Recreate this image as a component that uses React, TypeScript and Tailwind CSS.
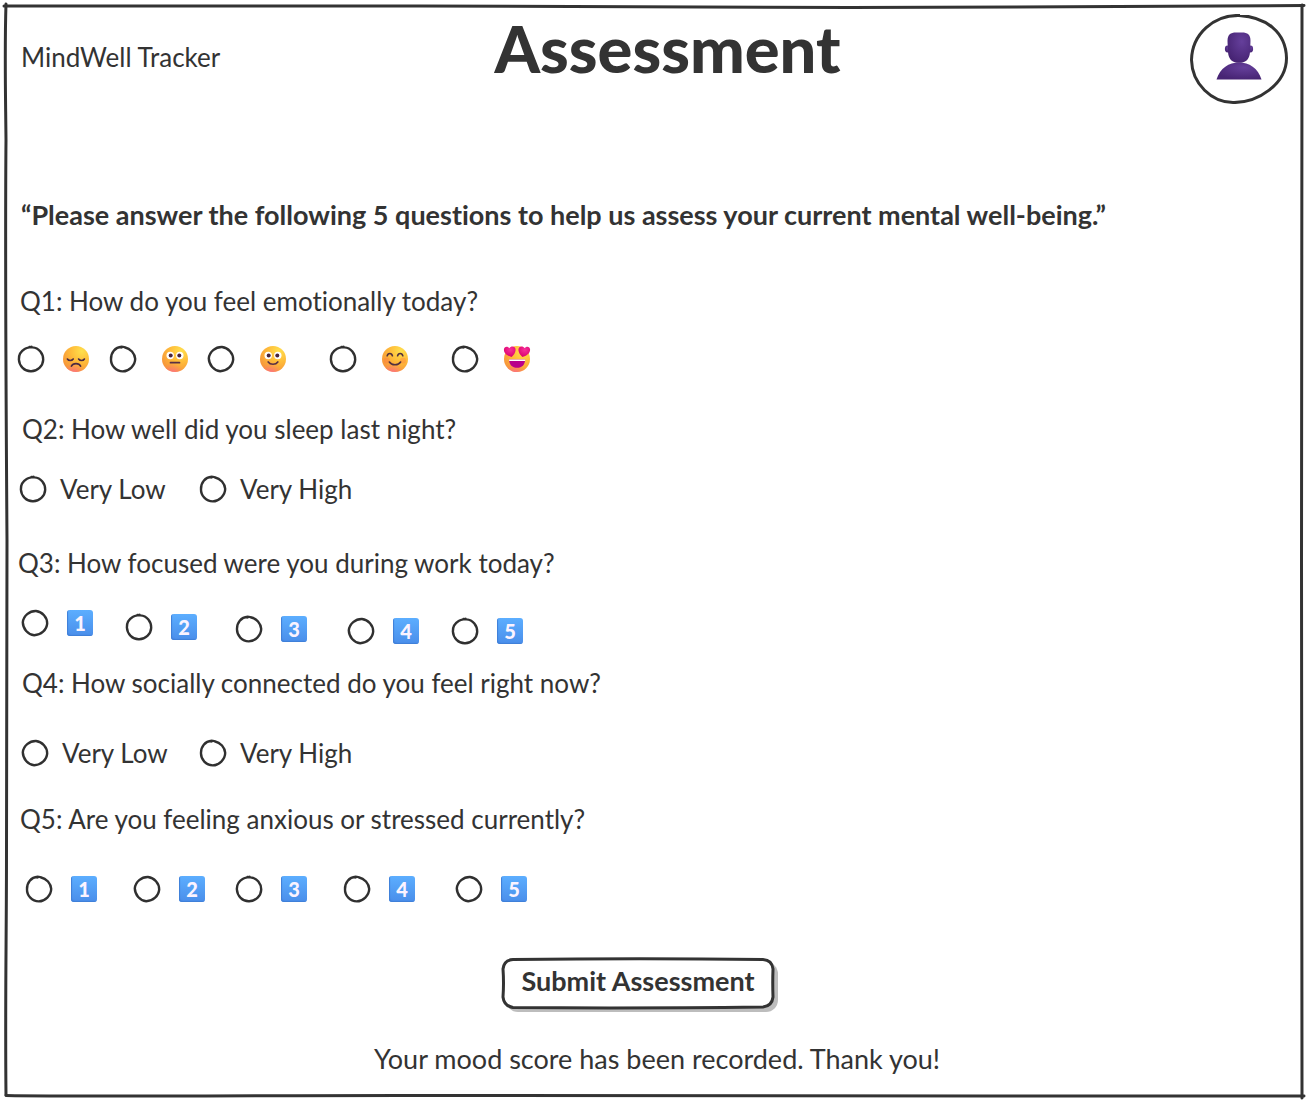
import type { ReactNode } from "react";

const ringShapes = [
  "M14.6 1.800 C13 2.600 10.500 2.200 8 3.800 C3.500 6.500 1.600 10 1.900 14.500 C2.200 21 7.500 26.300 13.800 26.200 C20.500 26.400 26 21 26.200 14.800 C26.400 9 22 2.800 15.500 2.400 L12.500 2",
  "M12.800 1.800 C6 2.400 1.800 7.400 2 14.200 C1.800 20.600 7 26.200 13.800 26.400 C20 26.200 26.200 20.500 26.200 13.800 C25.800 8.600 21.600 3.400 15.600 2.200 C14.400 1.600 13.400 1.800 12.200 2.400",
  "M15 2 C8.600 1.800 2.400 6.800 1.800 13.400 C2 19.800 6.800 25.600 13.200 26.200 C20 26.200 25.800 20.800 26.200 14.400 C26.200 8.400 21.400 2.600 15 2",
];

function Ring({ shape }: { shape: number }) {
  return (
    <svg viewBox="0 0 28 28" className="pointer-events-none absolute inset-0 size-7" fill="none" stroke="#303030" strokeWidth="2.4" strokeLinecap="round" strokeLinejoin="round" aria-hidden="true">
      <path d={ringShapes[shape % ringShapes.length]} />
    </svg>
  );
}

function Option({ name, value, shape, className, gap, children }: { name: string; value: string; shape: number; className: string; gap: string; children: ReactNode }) {
  return (
    <label className={`flex h-7 shrink-0 items-center whitespace-nowrap ${gap} ${className}`}>
      <span className="relative grid size-7 shrink-0 place-items-center">
        <input type="radio" name={name} value={value} aria-label={value} className="size-4 appearance-none rounded-full checked:bg-[#303030]" />
        <Ring shape={shape} />
      </span>
      {children}
    </label>
  );
}

function EmojiDefs() {
  return (
    <svg className="absolute size-0" aria-hidden="true">
      <defs>
        <radialGradient id="face" cx="0.72" cy="0.2" r="0.9">
          <stop offset="0" stopColor="#ffe04d" />
          <stop offset="0.45" stopColor="#ffbd3a" />
          <stop offset="1" stopColor="#f5903a" />
        </radialGradient>
        <radialGradient id="chin" cx="0.4" cy="1.1" r="0.45">
          <stop offset="0" stopColor="#ff5fa8" stopOpacity="0.9" />
          <stop offset="1" stopColor="#ff7a70" stopOpacity="0" />
        </radialGradient>
        <radialGradient id="heart" cx="0.55" cy="0.3" r="0.7">
          <stop offset="0" stopColor="#f8309a" />
          <stop offset="1" stopColor="#d9006c" />
        </radialGradient>
        <radialGradient id="person" cx="0.62" cy="0.3" r="0.7">
          <stop offset="0" stopColor="#653f9b" />
          <stop offset="1" stopColor="#472474" />
        </radialGradient>
      </defs>
    </svg>
  );
}

type Mood = "sad" | "neutral" | "slight" | "happy" | "love";

const eyeGlyph = (
  <>
    <circle cx="9.2" cy="10.5" r="3.7" fill="#fff" />
    <circle cx="18.8" cy="10.5" r="3.7" fill="#fff" />
    <circle cx="9.7" cy="10.5" r="2" fill="#47243d" />
    <circle cx="18.3" cy="10.5" r="2" fill="#47243d" />
  </>
);

const features: Record<Mood, ReactNode> = {
  sad: (
    <g fill="none" stroke="#4b2942" strokeWidth="1.6" strokeLinecap="round">
      <path d="M5.400 14c1.200 2 4.400 2 5.800 0M16.600 14c1.400 2 4.600 2 5.800 0M9.400 21.200c1.600-3.400 7.600-3.400 9.200 0" />
    </g>
  ),
  neutral: (
    <>
      {eyeGlyph}
      <path d="M9.500 17.700h9" stroke="#5a3045" strokeWidth="1.7" strokeLinecap="round" />
    </>
  ),
  slight: (
    <>
      {eyeGlyph}
      <path d="M9.200 17c2 3 7.600 3 9.600 0" fill="none" stroke="#5a3045" strokeWidth="1.7" strokeLinecap="round" />
    </>
  ),
  happy: (
    <>
      <circle cx="5.8" cy="15.4" r="3" fill="#ff6a45" opacity="0.3" />
      <circle cx="22" cy="15.4" r="3" fill="#ff6a45" opacity="0.3" />
      <path d="M6.200 10.800c.6-3 4.600-3 5.200 0M16.600 10.800c.6-3 4.600-3 5.200 0M8.400 17c2.200 3.600 9 3.600 11.200 0" fill="none" stroke="#51303f" strokeWidth="1.6" strokeLinecap="round" />
    </>
  ),
  love: (
    <>
      <path d="M6 14.400h16.200c-.3 5.200-3.200 8.400-8.100 8.400S6.300 19.600 6 14.400Z" fill="#b8008b" />
      <path d="M6 14.400h16.200v1.700H6.200Z" fill="#fff" />
      <path d="M8.600 12C4.600 10.900.9 8.600.9 4.800.9 1.400 4.700.6 6.300 3.200 8.200.5 12.700 1.300 12.600 5c-.2 3-2 5.200-4 7Z" fill="url(#heart)" />
      <path d="M19.400 12c4-1.100 7.700-3.400 7.700-7.200 0-3.400-3.800-4.200-5.400-1.600-1.900-2.700-6.400-1.900-6.300 1.800.2 3 2 5.200 4 7Z" fill="url(#heart)" />
    </>
  ),
};

function Emoji({ mood }: { mood: Mood }) {
  return (
    <svg viewBox="0 0 28 28" className="size-7 shrink-0" aria-hidden="true">
      <circle cx="14" cy="14" r="13" fill="url(#face)" />
      <circle cx="14" cy="14" r="13" fill="url(#chin)" />
      {features[mood]}
    </svg>
  );
}

function DigitTile({ digit }: { digit: number }) {
  return (
    <span className="grid size-[26px] shrink-0 place-items-center rounded-[3px] bg-linear-to-b from-[#5caeff] to-[#4a8eea] text-xl leading-none font-black text-[#fbf3ff] shadow-[inset_1px_-1px_1px_#3f7fd8]">
      {digit}
    </span>
  );
}

function Question({ title, className, rowClass, children }: { title: string; className: string; rowClass: string; children: ReactNode }) {
  return (
    <fieldset className={className}>
      <legend className="text-[26px] leading-8">{title}</legend>
      <div className={`flex items-start text-[26px] leading-7 ${rowClass}`}>{children}</div>
    </fieldset>
  );
}

const moods: { mood: Mood; label: string; gap: string; width: string }[] = [
  { mood: "sad", label: "Very sad", gap: "gap-[17px]", width: "w-[92px]" },
  { mood: "neutral", label: "Neutral", gap: "gap-6", width: "w-[98px]" },
  { mood: "slight", label: "Fine", gap: "gap-6", width: "w-[122px]" },
  { mood: "happy", label: "Happy", gap: "gap-6", width: "w-[122px]" },
  { mood: "love", label: "Great", gap: "gap-6", width: "w-20" },
];

const focusCells = ["w-[104px]", "w-[110px] mt-1", "w-[112px] mt-1.5", "w-[104px] mt-2", "w-20 mt-2"];
const stressCells = ["w-[108px]", "w-[102px]", "w-[108px]", "w-[112px]", "w-20"];

function Frame() {
  return (
    <svg viewBox="0 0 1308 1102" preserveAspectRatio="none" className="pointer-events-none absolute inset-0 size-full" fill="none" stroke="#333" strokeWidth="3" strokeLinecap="round" aria-hidden="true">
      <path vectorEffect="non-scaling-stroke" d="M4 6 H420 C560 6 700 7.500 850 7.500 S1200 5.500 1304 5.500" />
      <path vectorEffect="non-scaling-stroke" d="M6 4 C4.500 50 5.500 90 6 140 C5 250 6 400 7 540 C7.500 660 6.500 760 6.500 850 S5 1000 6 1095" />
      <path vectorEffect="non-scaling-stroke" d="M1302 5 C1302 200 1301 400 1301.500 560 S1303 900 1302 1098" />
      <path vectorEffect="non-scaling-stroke" d="M6 1095.500 C90 1097 200 1095.500 400 1095.500 S1000 1096.500 1304 1096" />
    </svg>
  );
}

export default function App() {
  return (
    <div className="relative bg-white pr-5 pb-[27px] font-[Lato,sans-serif] text-[#333] [font-variant-ligatures:none]">
      <EmojiDefs />
      <Frame />
      <header className="grid grid-cols-[1fr_auto_1fr] items-center pt-3.5 pl-[21px]">
        <p className="pb-1 text-[26px] leading-8">MindWell Tracker</p>
        <h1 className="pb-[22px] pl-[26px] text-[65px] leading-[68px] font-black">Assessment</h1>
        <button type="button" aria-label="Profile" className="justify-self-end">
          <svg viewBox="0 0 98 90" className="h-[90px] w-[98px]" aria-hidden="true">
            <path d="M50 1.500 C24 .5 2 20 1.500 46 C2 70 22 88.500 43 88.500 C68 89 96.500 70 96.500 44 C96 18 76 3 49 1.500" fill="none" stroke="#333" strokeWidth="3" />
            <g fill="url(#person)">
              <ellipse cx="37.500" cy="35" rx="2.600" ry="3.400" />
              <ellipse cx="60.500" cy="35" rx="2.600" ry="3.400" />
              <path d="M26.500 65.500 C30 54 39 48.500 49 48.500 S68 54 71.500 65.500Z" />
              <path d="M37.500 27 C37.500 20.500 40.500 18.500 46 18.500 H52 C57.500 18.500 60.500 20.500 60.500 27 L60 38 C59.500 46 55 48.800 49 48.800 S38.500 46 38 38Z" />
            </g>
          </svg>
        </button>
      </header>

      <main>
        <p className="mt-[95px] pl-[21px] text-[27px] leading-8 font-bold">
          “Please answer the following 5 questions to help us assess your current mental well-being.”
        </p>
        <form onSubmit={(event) => event.preventDefault()}>
          <Question title="Q1: How do you feel emotionally today?" className="mt-[54px] *:first:pl-5" rowClass="mt-7 pl-[17px]">
            {moods.map((item, i) => (
              <Option key={item.mood} name="mood" value={item.label} shape={i} className={item.width} gap={item.gap}>
                <Emoji mood={item.mood} />
              </Option>
            ))}
          </Question>

          <Question title="Q2: How well did you sleep last night?" className="mt-10 *:first:pl-[22px]" rowClass="mt-[30px] pl-[19px]">
            <Option name="sleep" value="Very Low" shape={0} className="w-[180px]" gap="gap-[13px]">Very Low</Option>
            <Option name="sleep" value="Very High" shape={1} className="w-[180px]" gap="gap-[13px]">Very High</Option>
          </Question>

          <Question title="Q3: How focused were you during work today?" className="mt-11 *:first:pl-[18px]" rowClass="mt-[30px] pl-[21px]">
            {focusCells.map((cell, i) => (
              <Option key={i} name="focus" value={String(i + 1)} shape={i + 2} className={cell} gap="gap-[18px]">
                <DigitTile digit={i + 1} />
              </Option>
            ))}
          </Question>

          <Question title="Q4: How socially connected do you feel right now?" className="mt-[22px] *:first:pl-[22px]" rowClass="mt-10 pl-[21px]">
            <Option name="social" value="Very Low" shape={2} className="w-[178px]" gap="gap-[13px]">Very Low</Option>
            <Option name="social" value="Very High" shape={1} className="w-[180px]" gap="gap-[13px]">Very High</Option>
          </Question>

          <Question title="Q5: Are you feeling anxious or stressed currently?" className="mt-9 *:first:pl-5" rowClass="mt-10 pl-[25px]">
            {stressCells.map((cell, i) => (
              <Option key={i} name="stress" value={String(i + 1)} shape={i + 1} className={cell} gap="gap-[18px]">
                <DigitTile digit={i + 1} />
              </Option>
            ))}
          </Question>

          <div className="mt-[54px] flex justify-center pr-3">
            <button type="submit" className="relative h-[52px] w-[274px] text-[27px] font-bold">
              <svg viewBox="0 0 274 52" preserveAspectRatio="none" className="absolute inset-0 size-full overflow-visible" aria-hidden="true">
                <rect x="5" y="5" width="272" height="50" rx="12" fill="#bdbdbd" />
                <path d="M12 2.500 Q140 1 262 2.500 Q271 3 272 12 Q271.500 26 272 40 Q271 49 262 50 Q130 51.500 12 50.500 Q3 49 2 40 Q3 26 2 12 Q3 3 12 2.500Z" fill="#fff" stroke="#333" strokeWidth="3" />
              </svg>
              <span className="relative block pb-1 leading-8">Submit Assessment</span>
            </button>
          </div>
        </form>
        <p role="status" className="mt-[34px] pl-[26px] text-center text-[27px] leading-8">
          Your mood score has been recorded. Thank you!
        </p>
      </main>
    </div>
  );
}
